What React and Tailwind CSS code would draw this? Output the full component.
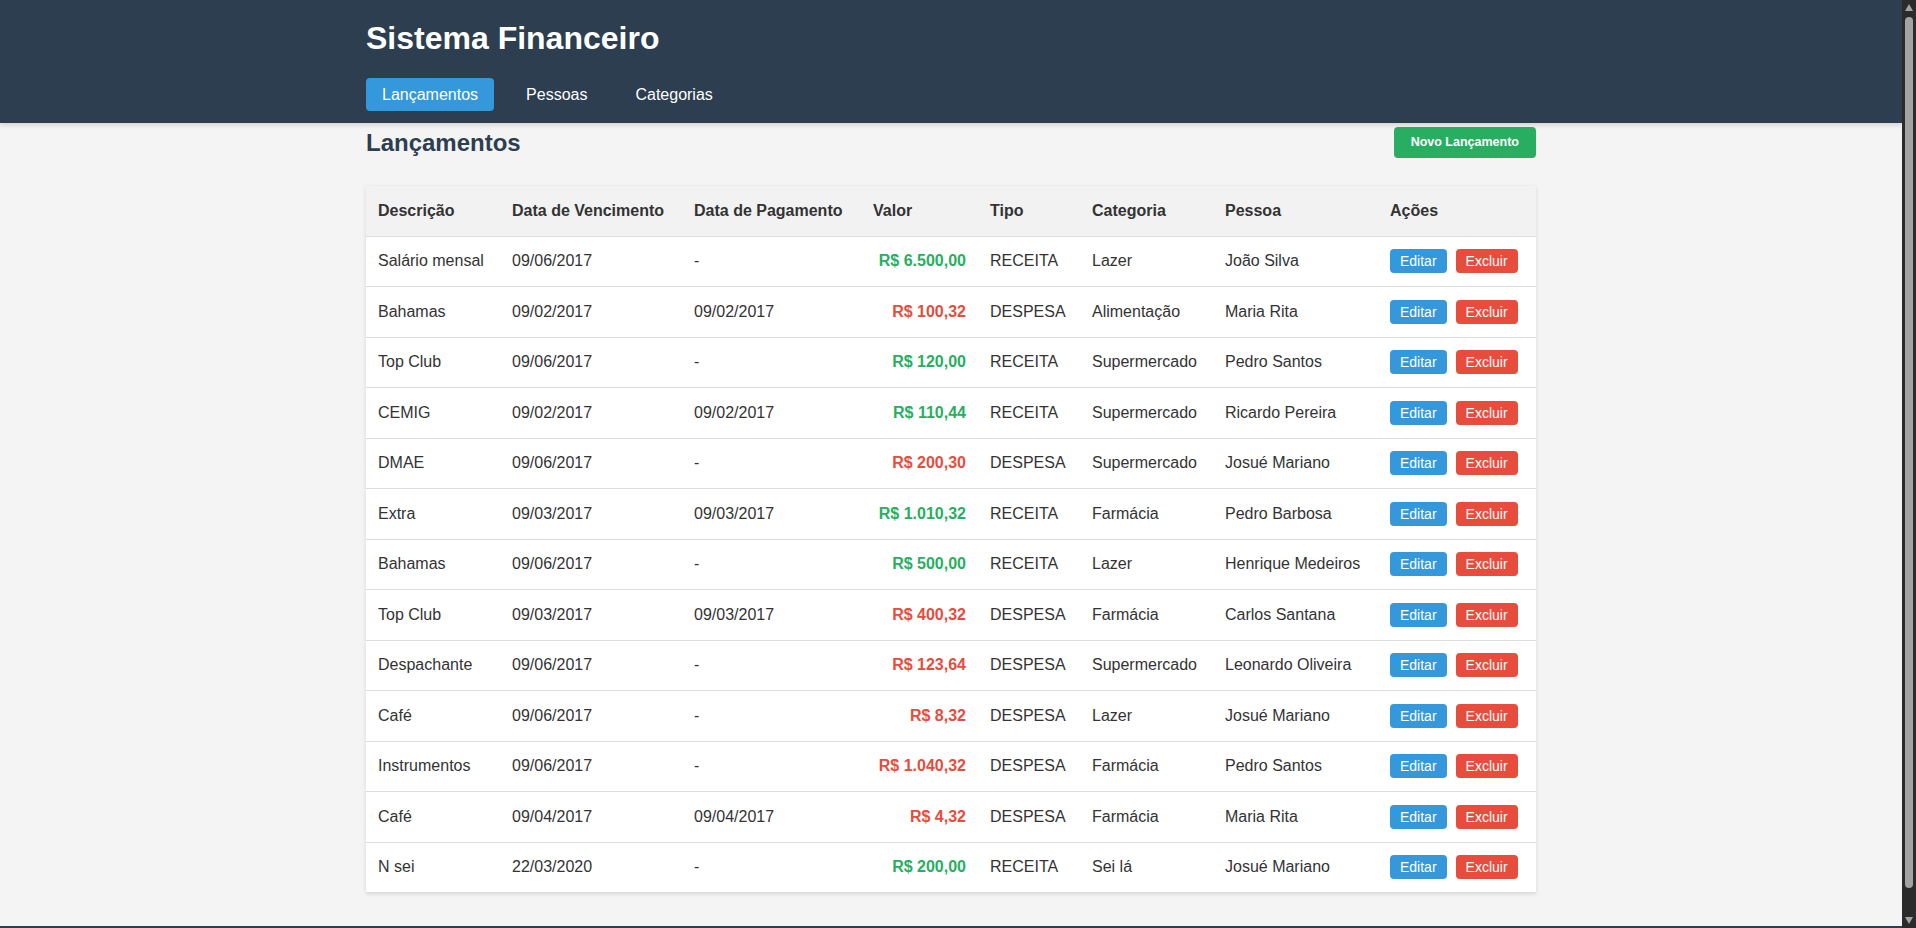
import React from 'react';

const rows = [
  ['Salário mensal', '09/06/2017', '-', 'R$ 6.500,00', 'RECEITA', 'Lazer', 'João Silva'],
  ['Bahamas', '09/02/2017', '09/02/2017', 'R$ 100,32', 'DESPESA', 'Alimentação', 'Maria Rita'],
  ['Top Club', '09/06/2017', '-', 'R$ 120,00', 'RECEITA', 'Supermercado', 'Pedro Santos'],
  ['CEMIG', '09/02/2017', '09/02/2017', 'R$ 110,44', 'RECEITA', 'Supermercado', 'Ricardo Pereira'],
  ['DMAE', '09/06/2017', '-', 'R$ 200,30', 'DESPESA', 'Supermercado', 'Josué Mariano'],
  ['Extra', '09/03/2017', '09/03/2017', 'R$ 1.010,32', 'RECEITA', 'Farmácia', 'Pedro Barbosa'],
  ['Bahamas', '09/06/2017', '-', 'R$ 500,00', 'RECEITA', 'Lazer', 'Henrique Medeiros'],
  ['Top Club', '09/03/2017', '09/03/2017', 'R$ 400,32', 'DESPESA', 'Farmácia', 'Carlos Santana'],
  ['Despachante', '09/06/2017', '-', 'R$ 123,64', 'DESPESA', 'Supermercado', 'Leonardo Oliveira'],
  ['Café', '09/06/2017', '-', 'R$ 8,32', 'DESPESA', 'Lazer', 'Josué Mariano'],
  ['Instrumentos', '09/06/2017', '-', 'R$ 1.040,32', 'DESPESA', 'Farmácia', 'Pedro Santos'],
  ['Café', '09/04/2017', '09/04/2017', 'R$ 4,32', 'DESPESA', 'Farmácia', 'Maria Rita'],
  ['N sei', '22/03/2020', '-', 'R$ 200,00', 'RECEITA', 'Sei lá', 'Josué Mariano'],
];

export default function App() {
  return (
    <div className="h-screen flex overflow-hidden bg-[#f4f4f4] text-[#333] font-['Liberation_Sans',Arial,sans-serif]">
      <div className="flex-1 min-w-0 overflow-hidden">
        {/* Header */}
        <header className="bg-[#2c3e50] shadow-[0_2px_5px_rgba(0,0,0,0.15)]">
          <div className="max-w-[1170px] mx-auto pt-5 pb-3">
            <h1 className="text-[32px] font-bold text-white leading-[37px]">Sistema Financeiro</h1>
            <nav className="flex gap-4 mt-[21px]">
              <a className="h-[33px] flex items-center px-4 rounded bg-[#3498db] text-white text-base">Lançamentos</a>
              <a className="h-[33px] flex items-center px-4 rounded text-white text-base">Pessoas</a>
              <a className="h-[33px] flex items-center px-4 rounded text-white text-base">Categorias</a>
            </nav>
          </div>
        </header>

        {/* Content */}
        <main className="max-w-[1170px] mx-auto pt-1">
          <div className="flex items-center justify-between h-[31px]">
            <h2 className="text-2xl font-bold text-[#2c3e50] leading-[28px]">Lançamentos</h2>
            <button className="h-[31px] px-[17px] rounded bg-[#27ae60] text-white text-[12.5px] font-bold">Novo Lançamento</button>
          </div>

          <div className="mt-[28px] bg-white shadow-[0_1px_4px_rgba(0,0,0,0.12)]">
            <table className="w-full border-collapse text-left text-base">
              <thead>
                <tr className="bg-[#f2f2f2] border-b border-[#ddd]">
                  <th className="w-[134px] px-3 h-[50px] font-bold">Descrição</th>
                  <th className="w-[182px] px-3 font-bold">Data de Vencimento</th>
                  <th className="w-[179px] px-3 font-bold">Data de Pagamento</th>
                  <th className="w-[117px] px-3 font-bold">Valor</th>
                  <th className="w-[102px] px-3 font-bold">Tipo</th>
                  <th className="w-[133px] px-3 font-bold">Categoria</th>
                  <th className="w-[165px] px-3 font-bold">Pessoa</th>
                  <th className="w-[158px] px-3 font-bold">Ações</th>
                </tr>
              </thead>
              <tbody>
                {rows.map((r, i) => {
                  const receita = r[4] === 'RECEITA';
                  return (
                    <tr key={i} className="border-b border-[#ddd]">
                      <td className="px-3 h-[50.5px]">{r[0]}</td>
                      <td className="px-3">{r[1]}</td>
                      <td className="px-3">{r[2]}</td>
                      <td className={`px-3 text-right font-bold ${receita ? 'text-[#27ae60]' : 'text-[#e74c3c]'}`}>{r[3]}</td>
                      <td className="px-3">{r[4]}</td>
                      <td className="px-3">{r[5]}</td>
                      <td className="px-3">{r[6]}</td>
                      <td className="px-3">
                        <div className="flex gap-[9px]">
                          <button className="h-6 px-[10px] rounded bg-[#3498db] text-white text-sm">Editar</button>
                          <button className="h-6 px-[10px] rounded bg-[#e74c3c] text-white text-sm">Excluir</button>
                        </div>
                      </td>
                    </tr>
                  );
                })}
              </tbody>
            </table>
          </div>
        </main>

        <footer className="mt-[33px] h-[31px] bg-[#2c3e50]"></footer>
      </div>

      {/* Scrollbar */}
      <div className="w-[14px] shrink-0 bg-[#2b2b2b] flex flex-col items-center pt-1 pb-1">
        <svg width="8" height="7" viewBox="0 0 8 7" className="shrink-0"><path d="M4 0L8 7H0Z" fill="#a3a3a3" /></svg>
        <div className="mt-[6px] w-2 h-[871px] rounded-full bg-[#a3a3a3]"></div>
        <div className="flex-1"></div>
        <svg width="8" height="7" viewBox="0 0 8 7" className="shrink-0"><path d="M0 0H8L4 7Z" fill="#a3a3a3" /></svg>
      </div>
    </div>
  );
}
